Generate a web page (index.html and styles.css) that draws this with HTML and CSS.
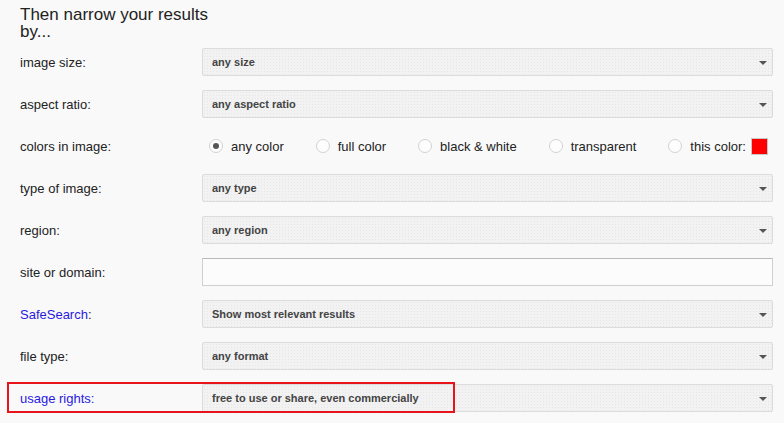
FILE: index.html
```html
<!DOCTYPE html>
<html lang="en">

<head>
    <meta charset="utf-8">
    <meta name="viewport" content="width=device-width, initial-scale=1.0">
    <title>Advanced Image Search</title>
    <link rel="stylesheet" href="styles.css">
</head>

<body>
    <h1 class="overskrift">Then narrow your results by...</h1>

    <div class="skema">
        <label class="felt">image size:</label>
        <div class="vaelger">any size</div>

        <label class="felt">aspect ratio:</label>
        <div class="vaelger">any aspect ratio</div>

        <label class="felt">colors in image:</label>
        <div class="farver">
            <span class="valg"><span class="radio valgt"></span>any color</span>
            <span class="valg"><span class="radio"></span>full color</span>
            <span class="valg"><span class="radio"></span>black &amp; white</span>
            <span class="valg"><span class="radio"></span>transparent</span>
            <span class="valg"><span class="radio"></span>this color:<span class="prove"></span></span>
        </div>

        <label class="felt">type of image:</label>
        <div class="vaelger">any type</div>

        <label class="felt">region:</label>
        <div class="vaelger">any region</div>

        <label class="felt">site or domain:</label>
        <div class="tekstfelt"></div>

        <label class="felt"><span class="link">SafeSearch</span>:</label>
        <div class="vaelger">Show most relevant results</div>

        <label class="felt">file type:</label>
        <div class="vaelger">any format</div>

        <label class="felt link fremhaevet">usage rights:</label>
        <div class="vaelger">free to use or share, even commercially</div>
    </div>
</body>

</html>
```
FILE: styles.css
```css
* {
    margin: 0;
    padding: 0;
    box-sizing: border-box;
}

body {
    background-color: #f9f9f9;
    font-family: Arial, 'Liberation Sans', sans-serif;
    color: #222;
    padding-left: 20px;
    padding-bottom: 10px;
}

.overskrift {
    font-size: 17px;
    font-weight: normal;
    line-height: 17px;
    width: 192px;
    padding-top: 6px;
    height: 48px;
}

.skema {
    display: grid;
    grid-template-columns: 182px 571px;
    grid-auto-rows: 28px;
    row-gap: 14px;
}

.felt {
    font-size: 13px;
    display: flex;
    align-items: center;
}

.link {
    color: #2a1ae0;
}

.fremhaevet {
    position: relative;
    z-index: 2;
}

.fremhaevet::before {
    content: "";
    position: absolute;
    left: -13px;
    top: -2px;
    width: 448px;
    height: 31px;
    border: 2px solid #e8141b;
    box-sizing: border-box;
}

.vaelger {
    position: relative;
    display: flex;
    align-items: center;
    padding-left: 9px;
    font-size: 11px;
    font-weight: bold;
    color: #444;
    border: 1px solid #dcdcdc;
    border-radius: 2px;
    background-color: #f2f2f2;
    background-image: radial-gradient(#e6e6e6 0.6px, transparent 0.8px);
    background-size: 3px 3px;
}

.vaelger::after {
    content: "";
    position: absolute;
    right: 5px;
    top: 12px;
    border-left: 4px solid transparent;
    border-right: 4px solid transparent;
    border-top: 4px solid #555;
}

.tekstfelt {
    background-color: #fcfcfc;
    border: 1px solid #d0d0d0;
    border-top-color: #b9b9b9;
}

.farver {
    display: flex;
    align-items: center;
    justify-content: space-between;
    padding-left: 7px;
    padding-right: 5px;
    font-size: 13px;
}

.valg {
    display: flex;
    align-items: center;
}

.radio {
    width: 14px;
    height: 14px;
    border-radius: 50%;
    border: 1px solid #d2d2d2;
    background-color: #fdfdfd;
    margin-right: 8px;
    display: flex;
    align-items: center;
    justify-content: center;
}

.radio.valgt::after {
    content: "";
    width: 6px;
    height: 6px;
    border-radius: 50%;
    background-color: #555;
}

.prove {
    width: 17px;
    height: 17px;
    margin-left: 5px;
    background-color: #ff0000;
    border: 1px solid #c8c8c8;
}
```
